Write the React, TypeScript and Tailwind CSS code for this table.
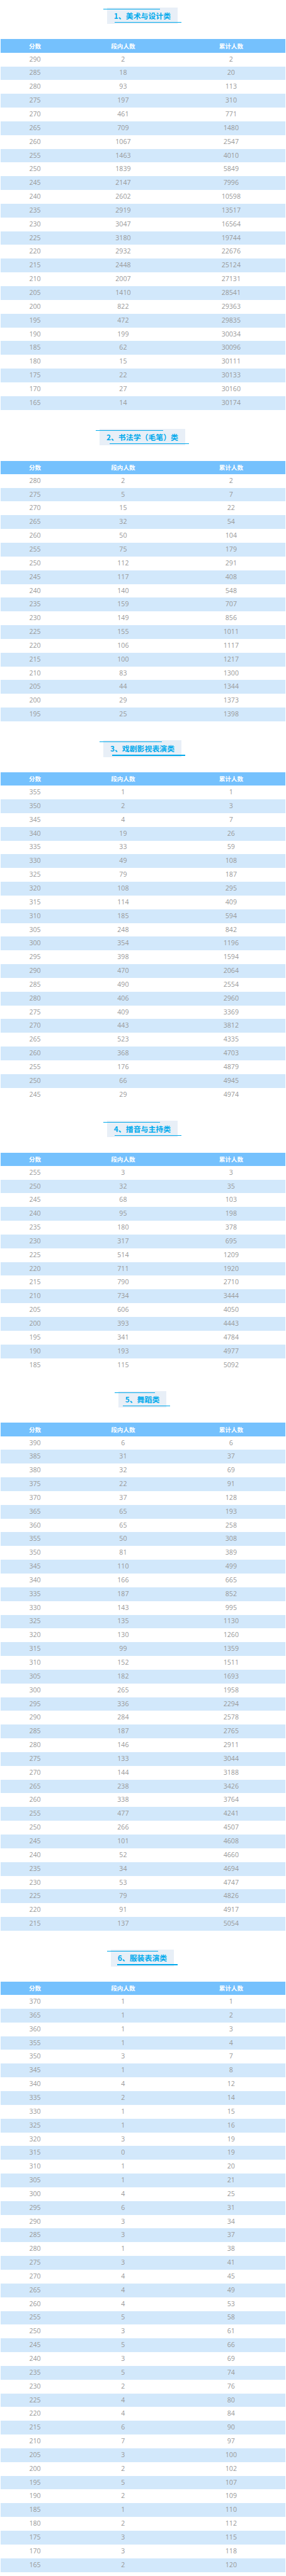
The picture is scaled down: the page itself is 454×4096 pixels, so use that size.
import React from "react";

type Section = { title: string; top: number; counts: number[] };

const sections: Section[] = [
    {
        title: "1、美术与设计类",
        top: 290,
        counts: [2, 18, 93, 197, 461, 709, 1067, 1463, 1839, 2147, 2602, 2919, 3047, 3180, 2932, 2448, 2007, 1410, 822, 472, 199, 62, 15, 22, 27, 14],
    },
    {
        title: "2、书法学（毛笔）类",
        top: 280,
        counts: [2, 5, 15, 32, 50, 75, 112, 117, 140, 159, 149, 155, 106, 100, 83, 44, 29, 25],
    },
    {
        title: "3、戏剧影视表演类",
        top: 355,
        counts: [1, 2, 4, 19, 33, 49, 79, 108, 114, 185, 248, 354, 398, 470, 490, 406, 409, 443, 523, 368, 176, 66, 29],
    },
    {
        title: "4、播音与主持类",
        top: 255,
        counts: [3, 32, 68, 95, 180, 317, 514, 711, 790, 734, 606, 393, 341, 193, 115],
    },
    {
        title: "5、舞蹈类",
        top: 390,
        counts: [6, 31, 32, 22, 37, 65, 65, 50, 81, 110, 166, 187, 143, 135, 130, 99, 152, 182, 265, 336, 284, 187, 146, 133, 144, 238, 338, 477, 266, 101, 52, 34, 53, 79, 91, 137],
    },
    {
        title: "6、服装表演类",
        top: 370,
        counts: [1, 1, 1, 1, 3, 1, 4, 2, 1, 1, 3, 0, 1, 1, 4, 6, 3, 3, 1, 3, 4, 4, 4, 5, 3, 5, 3, 5, 2, 4, 4, 6, 7, 3, 2, 5, 2, 1, 2, 3, 3, 2],
    },
];

const Title = ({ text }: { text: string }) => (
    <div className="flex justify-center pr-[2px]">
        <div className="relative flex h-[26.5px] items-center bg-[#e8eff7] px-[10.6px] text-[11.9px] font-bold text-[#00a9ec]">
            <span className="absolute left-[-6.6px] top-[2px] h-px w-[calc(72.6%+9.3px)] bg-[#00a9ec]" />
            {text}
            <span className="absolute right-[-6.6px] top-[23px] h-[1.5px] w-[calc(84.8%+11.5px)] bg-[#00a9ec]" />
        </div>
    </div>
);

const ScoreTable = ({ section }: { section: Section }) => {
    let total = 0;
    const rows = section.counts.map((count, i) => {
        total += count;
        return { score: section.top - i * 5, count, total };
    });

    return (
        <div className="px-[1.4px]">
            <div className="grid h-[21.2px] grid-cols-[24%_38%_38%] items-center bg-[#75c1fd] text-center text-[9.6px] font-bold text-white">
                <span>分数</span>
                <span>段内人数</span>
                <span>累计人数</span>
            </div>
            {rows.map((row, i) => (
                <div
                    key={row.score}
                    className={`grid h-[21.85px] grid-cols-[24%_38%_38%] items-center text-center font-['Open_Sans',sans-serif] text-[10.6px] text-[#999999] ${
                        i % 2 === 1 ? "bg-[#d2e8fb]" : "bg-white"
                    }`}
                >
                    <span>{row.score}</span>
                    <span>{row.count}</span>
                    <span>{row.total}</span>
                </div>
            ))}
        </div>
    );
};

const App = () => {
    return (
        <div className="flex w-[454px] flex-col gap-[30.2px] bg-white pt-[11.7px] font-['Noto_Sans_CJK_SC','Noto_Sans',sans-serif]">
            {sections.map((section) => (
                <section key={section.title} className="flex flex-col gap-[24.3px]">
                    <Title text={section.title} />
                    <ScoreTable section={section} />
                </section>
            ))}
        </div>
    );
};

export default App;
